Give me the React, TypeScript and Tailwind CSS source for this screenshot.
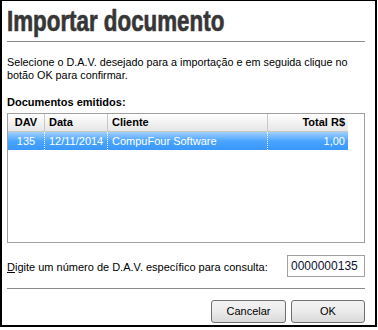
import React from "react";

export default function App() {
  const ui = { fontFamily: '"Liberation Sans", Arial, sans-serif' };
  return (
    <div className="w-[378px] h-[330px] bg-white relative" style={ui}>
      <div className="w-[377px] h-[327px] border-t border-l-2 border-r-2 border-b-2 border-black flex flex-col pl-[5px] pr-[10px]">
        <div className="h-[40px] pt-[2px] whitespace-nowrap">
          <span className="inline-block origin-left scale-x-[0.745] text-[30px] leading-[36px] font-bold text-[#363636] [-webkit-text-stroke:0.7px_#363636]">
            Importar documento
          </span>
        </div>
        <div className="h-px bg-[#8a8a8a]" />
        <div className="mt-[14px] text-[10.8px] leading-[13px] text-black">
          Selecione o D.A.V. desejado para a importação e em seguida clique no
          <br />
          botão OK para confirmar.
        </div>
        <div className="mt-[14px] text-[11px] leading-[13px] font-bold text-black">Documentos emitidos:</div>
        <div className="mt-[4px] h-[130px] border border-[#a0a0a0] flex flex-col">
          <div className="flex h-[18px] w-[340px] text-[11px] leading-[17px] font-bold text-black">
            <div className="w-[37px] text-center bg-gradient-to-b from-white to-[#e6e6e6] border-r border-b border-[#c8c8c8]">DAV</div>
            <div className="w-[63px] pl-[4px] bg-gradient-to-b from-white to-[#e6e6e6] border-r border-b border-[#c8c8c8]">Data</div>
            <div className="w-[160px] pl-[4px] bg-gradient-to-b from-white to-[#e6e6e6] border-r border-b border-[#c8c8c8]">Cliente</div>
            <div className="w-[80px] pr-[3px] text-right bg-gradient-to-b from-white to-[#e6e6e6] border-b border-[#c8c8c8]">Total R$</div>
          </div>
          <div className="flex h-[18px] w-[340px] text-[11px] leading-[18px] text-white bg-gradient-to-b from-[#9fcfff] via-[#4aa5ff] to-[#3997fb]">
            <div className="w-[37px] text-center border-r border-dotted border-white">135</div>
            <div className="w-[63px] pl-[4px] border-r border-dotted border-white">12/11/2014</div>
            <div className="w-[160px] pl-[4px] border-r border-dotted border-white">CompuFour Software</div>
            <div className="w-[80px] pr-[3px] text-right">1,00</div>
          </div>
        </div>
        <div className="mt-[12px] flex items-center justify-between">
          <div className="text-[11px] leading-[13px] text-black pt-[3px]">
            <span className="underline">D</span>igite um número de D.A.V. específico para consulta:
          </div>
          <div className="w-[78px] h-[22px] border border-[#a0a0a0] text-[12px] leading-[20px] pl-[3px] text-[#101030]">
            0000000135
          </div>
        </div>
        <div className="mt-[11px] h-px bg-[#8a8a8a]" />
        <div className="mt-[11px] flex justify-end gap-[5px]">
          <button className="w-[75px] h-[23px] rounded-[3px] border border-[#707070] bg-gradient-to-b from-[#f3f3f3] via-[#ebebeb] to-[#d9d9d9] text-[11px] text-black">
            Cancelar
          </button>
          <button className="w-[74px] h-[23px] rounded-[3px] border border-[#707070] bg-gradient-to-b from-[#f3f3f3] via-[#ebebeb] to-[#d9d9d9] text-[11px] text-black">
            OK
          </button>
        </div>
      </div>
    </div>
  );
}
